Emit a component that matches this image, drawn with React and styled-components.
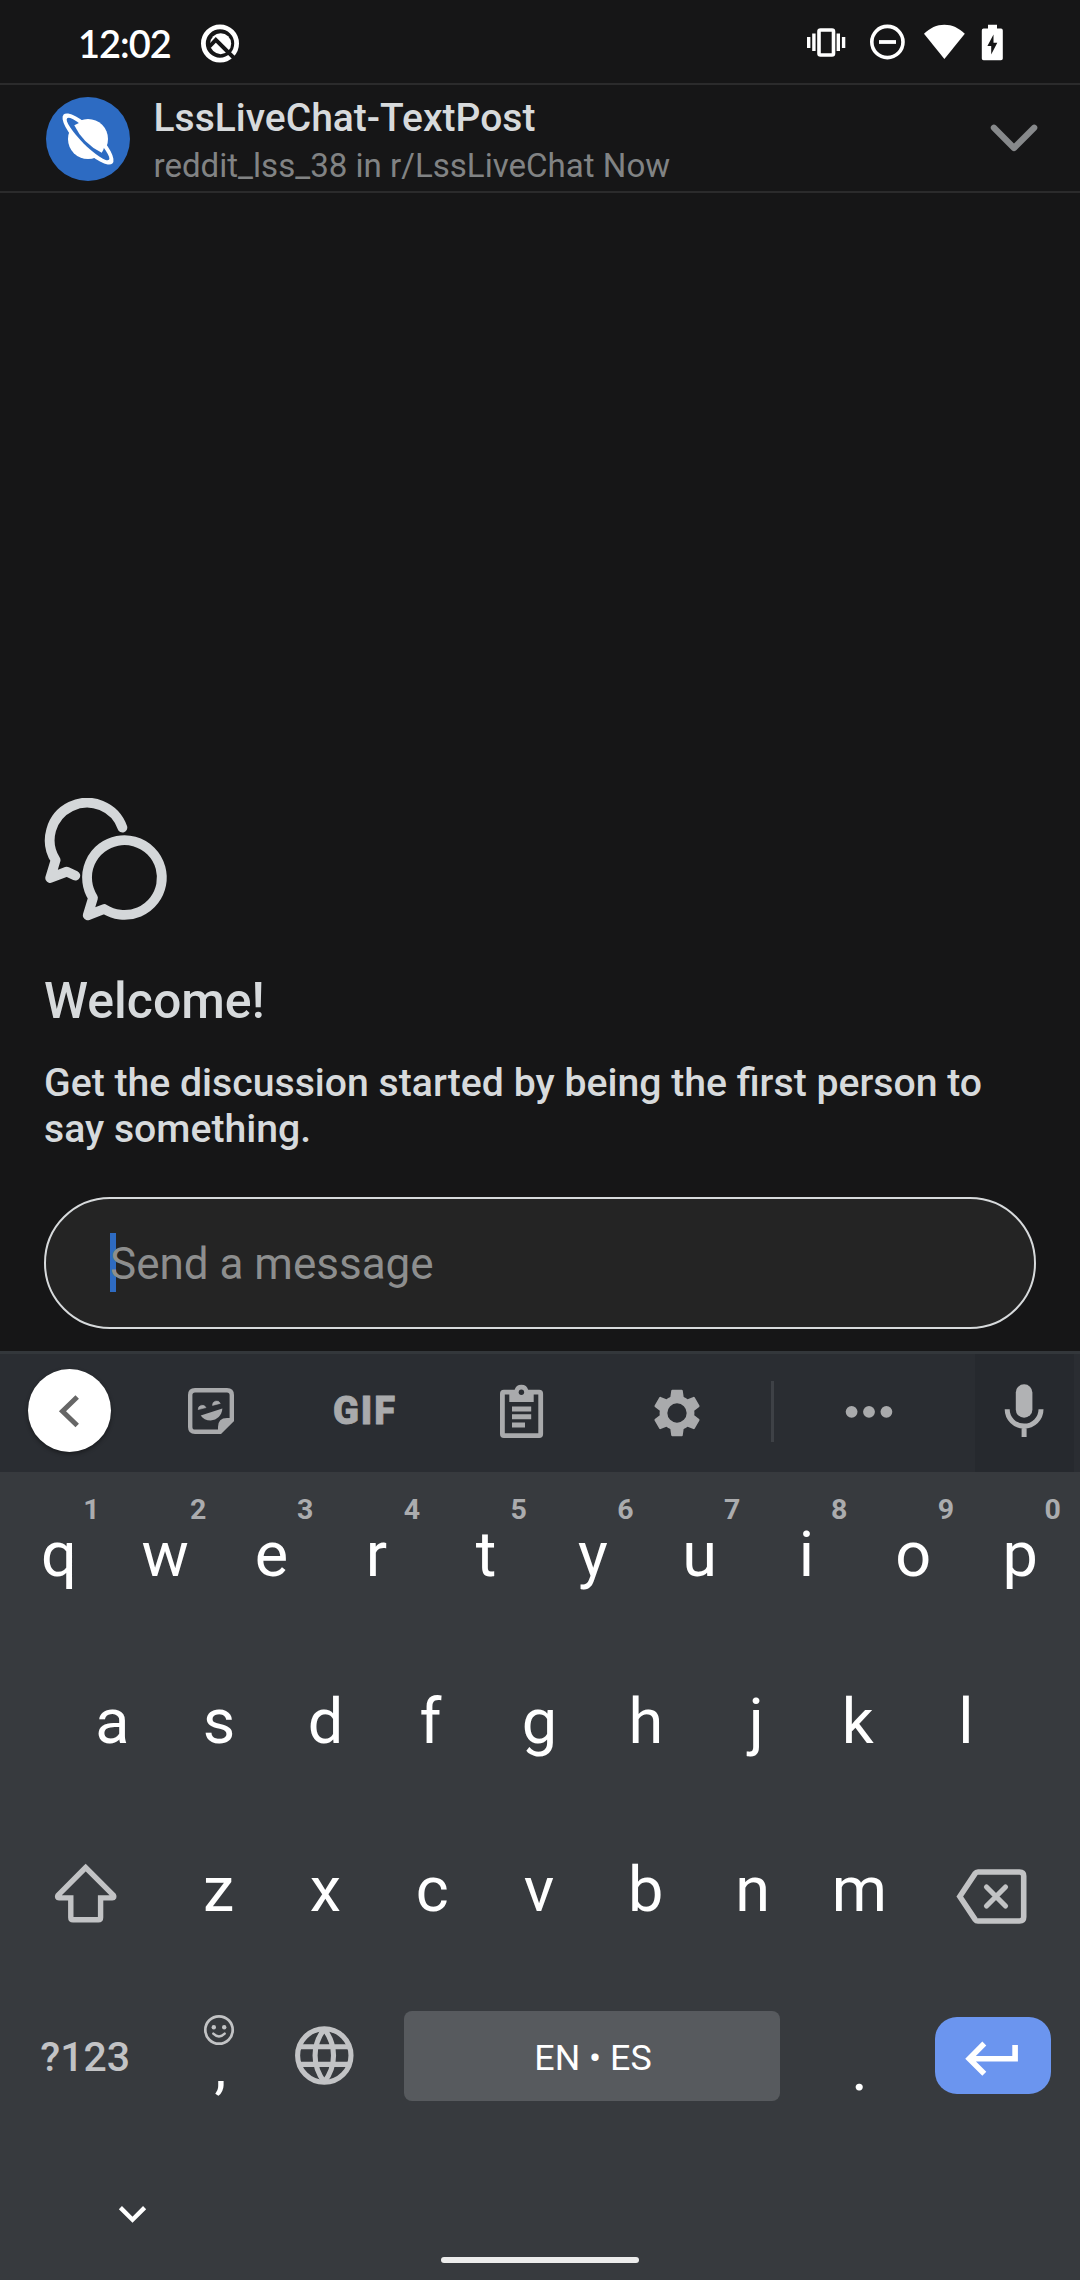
import React from "react";
import styled, { createGlobalStyle } from "styled-components";

const Global = createGlobalStyle`
  * { box-sizing: border-box; }
  body { margin: 0; background: #161617; font-family: Roboto, "Noto Sans", sans-serif; }
`;

const Screen = styled.main`
  width: 1080px;
  height: 2280px;
  display: flex;
  flex-direction: column;
  overflow: hidden;
  background: #161617;
`;

const Svg = styled.svg`
  display: block;
  flex: none;
`;

/* box = [x, y, width, height] of the drawn area */
const Icon = ({ box, children, ...rest }) => (
  <Svg width={box[2]} height={box[3]} viewBox={box.join(" ")} fill="none" {...rest}>
    {children}
  </Svg>
);

/* ---------- status bar ---------- */
const StatusBar = styled.header`
  height: 83px;
  padding: 0 77px 0 78px;
  display: flex;
  align-items: center;
  justify-content: space-between;
  color: #fff;
`;
const StatusLeft = styled.div`
  display: flex;
  align-items: center;
`;
const Clock = styled.span`
  width: 122px;
  padding-top: 3px;
  font: 600 38px/46px Lato, sans-serif;
  letter-spacing: -1px;
`;
const StatusRight = styled.div`
  display: flex;
  align-items: center;
  gap: ${(p) => p.$gap || 0}px;
`;

/* ---------- post header ---------- */
const PostHeader = styled.section`
  height: 110px;
  padding: 0 38px 0 46px;
  display: flex;
  align-items: center;
  border-top: 2px solid #2b2b2c;
  border-bottom: 2px solid #2b2b2c;
`;
const HeaderText = styled.div`
  flex: 1;
  margin-left: 23.5px;
  display: flex;
  flex-direction: column;
  padding-top: 8px;
`;
const Title = styled.h1`
  margin: 0;
  font-size: 39px;
  line-height: 48px;
  font-weight: 500;
  color: #d7dadc;
`;
const Subtitle = styled.span`
  font-size: 33.1px;
  line-height: 48px;
  color: #818384;
`;

/* ---------- chat ---------- */
const Chat = styled.section`
  flex: 1;
  display: flex;
  flex-direction: column;
  justify-content: flex-end;
  padding: 0 44px 22px;
  color: #d7dadc;
`;
const Welcome = styled.h2`
  margin: 51px 0 0;
  font-size: 50px;
  line-height: 58px;
  font-weight: 500;
`;
const Prompt = styled.p`
  margin: 29.5px 0 0;
  font-size: 39.2px;
  line-height: 46px;
  font-weight: 500;
`;
const MessageBox = styled.div`
  height: 132px;
  margin-top: 45.5px;
  padding-left: 64px;
  display: flex;
  align-items: center;
  border: 2px solid #d7dadc;
  border-radius: 66px;
  background: #242424;
`;
const Caret = styled.span`
  width: 6px;
  height: 59px;
  margin-right: -6px;
  margin-bottom: 2px;
  background: #2e6bc2;
`;
const Placeholder = styled.span`
  position: relative;
  padding-top: 1px;
  font-size: 44px;
  line-height: 52px;
  color: #8d8e8e;
`;

/* ---------- keyboard ---------- */
const Keyboard = styled.section`
  height: 929px;
  display: flex;
  flex-direction: column;
  background: #373a3e;
`;
const Toolbar = styled.div`
  height: 121px;
  padding-right: 6px;
  display: flex;
  align-items: center;
  border-top: 3px solid #33373b;
  background: #2a2d32;
`;
const BackButton = styled.div`
  width: 83px;
  height: 83px;
  margin: 0 22.25px 5px 28px;
  display: flex;
  align-items: center;
  justify-content: center;
  border-radius: 50%;
  background: #fff;
  box-shadow: 0 2px 4px rgba(0, 0, 0, 0.4);
`;
const Tool = styled.div`
  width: ${(p) => p.$w || 155.5}px;
  padding-right: ${(p) => p.$shift || 0}px;
  display: flex;
  justify-content: center;
`;
const GifLabel = styled.span`
  margin: 0 3px 4px 0;
  font: 900 38px/44px Roboto, sans-serif;
  letter-spacing: 2px;
  color: #a9aaac;
  -webkit-text-stroke: 0.8px #a9aaac;
`;
const Divider = styled.div`
  width: 3px;
  height: 61px;
  margin: 0 0 3px 15.75px;
  background: #3e4146;
`;
const MicTool = styled.div`
  width: 99px;
  height: 118px;
  margin-left: 10px;
  padding-right: 2px;
  display: flex;
  align-items: center;
  justify-content: center;
  background: #26292e;
`;

const Row = styled.div`
  height: 167.5px;
  display: flex;
  align-items: center;
  justify-content: center;
  padding-bottom: ${(p) => p.$lift || 0}px;
  padding-right: ${(p) => p.$inset || 0}px;
`;
const Key = styled.div`
  position: relative;
  flex: none;
  width: 106.8px;
  height: 100%;
  display: flex;
  align-items: center;
  justify-content: center;
  padding: 0 ${(p) => Math.max(0, -2 * p.$nudge)}px 2.5px ${(p) => Math.max(0, 2 * p.$nudge)}px;
  font-size: 63px;
  line-height: 74px;
  color: #fff;
`;
const Hint = styled.span`
  position: absolute;
  top: 23px;
  left: calc(50% + 17.6px);
  width: 30px;
  text-align: center;
  font-size: 28.5px;
  line-height: 30px;
  font-weight: 700;
  color: #abacae;
`;
const SideKey = styled.div`
  width: ${(p) => p.$w}px;
  height: 100%;
  display: flex;
  align-items: center;
  justify-content: center;
`;
const SymbolsKey = styled(SideKey)`
  padding: 3px 0 0 5px;
  font-size: 41px;
  font-weight: 500;
  color: #c2c3c5;
`;
const PunctuationKey = styled.div`
  width: ${(p) => p.$w}px;
  height: 100%;
  padding-top: ${(p) => p.$top}px;
  padding-left: ${(p) => p.$left || 0}px;
  display: flex;
  flex-direction: column;
  align-items: center;
  font-size: 63px;
  line-height: 40px;
  color: #fff;
`;
const Comma = styled.span`
  padding-left: 3px;
  font-size: 60px;
`;
const SpaceBar = styled.div`
  width: 376px;
  height: 90px;
  margin-left: 28px;
  display: flex;
  align-items: center;
  justify-content: center;
  padding: 5px 0 0 2px;
  border-radius: 8px;
  background: #575a5e;
  color: #fff;
  font-size: 35.8px;
`;
const EnterKey = styled.div`
  width: 116px;
  height: 77px;
  margin-right: 29px;
  display: flex;
  align-items: center;
  justify-content: center;
  border-radius: 22px;
  background: #6b95ef;
`;
const NavBar = styled.div`
  flex: 1;
  display: flex;
  flex-direction: column;
  padding-top: 61px;
`;
const Collapse = styled.div`
  padding-left: 116px;
`;
const HomeBar = styled.div`
  width: 198px;
  height: 6px;
  margin: 30px auto 0;
  border-radius: 3px;
  background: #ececec;
`;

const GREY = "#a9aaac";
const LIGHT = "#c2c3c5";

const StatusAppIcon = () => (
  <Icon box={[200, 20.5, 40, 42]}>
    <circle cx="220" cy="43" r="16.6" stroke="#fff" strokeWidth="4.8" />
    <circle cx="220.7" cy="43.2" r="10.5" fill="#fff" />
    <path d="M209.5 46 215.8 39.3 238 61.5" stroke="#161617" strokeWidth="4" />
  </Icon>
);

const VibrateIcon = () => (
  <Icon box={[806, 21.5, 40, 42]}>
    <rect x="819" y="30.5" width="14.5" height="25" rx="1.5" stroke="#fff" strokeWidth="3.6" />
    <path d="M808.7 37.5V48.5M843.6 37.5V48.5M813.9 34V51.5M838.3 34V51.5" stroke="#fff" strokeWidth="3.4" />
  </Icon>
);

const DndIcon = () => (
  <Icon box={[869, 21.5, 37, 42]} style={{ marginLeft: 23 }}>
    <circle cx="887.4" cy="42.5" r="15.6" stroke="#fff" strokeWidth="3.6" />
    <path d="M879 42.5H896" stroke="#fff" strokeWidth="3.8" />
  </Icon>
);

const WifiIcon = () => (
  <Icon box={[923, 21.5, 43, 42]} style={{ marginLeft: 17 }}>
    <path d="M944.4 59.5 924 34.3C929.8 28.6 936.8 25.3 944.4 25.3S959 28.6 964.8 34.3Z" fill="#fff" />
  </Icon>
);

const BatteryIcon = () => (
  <Icon box={[981, 21.5, 22, 42]} style={{ marginLeft: 15 }}>
    <path
      d="M988 25.3H997V29H1001Q1002.8 29 1002.8 31V59Q1002.8 60.8 1001 60.8H983.6Q981.8 60.8 981.8 59V31Q981.8 29 983.6 29H988Z"
      fill="#fff"
    />
    <path d="M993.5 35 987.4 46.5H991.2V55L997.3 43.2H993.5Z" fill="#161617" />
  </Icon>
);

const Avatar = () => (
  <Icon box={[46, 97, 84, 84]} style={{ marginTop: 2 }}>
    <circle cx="88" cy="139" r="42" fill="#2d6bc2" />
    <g transform="translate(88 139) rotate(45)">
      <circle r="20" fill="#fff" />
      <ellipse rx="34.5" ry="10.5" fill="#fff" />
      <ellipse rx="29.5" ry="6.2" fill="#2d6bc2" />
      <path d="M-19.4 0A19.8 19.8 0 0 1 19.4 0Q0 6.8-19.4 0Z" fill="#fff" />
    </g>
  </Icon>
);

const BubblesIcon = () => (
  <Icon box={[44, 798, 124, 123]}>
    <g stroke="#d4d7d9" strokeWidth="9.8" strokeLinecap="round" strokeLinejoin="round">
      <path d="M122.4 827.6A37.4 37.4 0 1 0 55.6 860.2L50.2 878 66.8 871.6 75.3 875.6" />
      <path d="M93 897.8 87.7 915.3 104.2 909A37.4 37.4 0 1 0 93 897.8Z" />
    </g>
  </Icon>
);

const StickerIcon = () => (
  <Icon box={[181, 1383, 60, 60]}>
    <path
      d="M220 1431.8H195Q190.2 1431.8 190.2 1427V1395Q190.2 1390.2 195 1390.2H227Q231.8 1390.2 231.8 1395V1420Z"
      stroke={GREY}
      strokeWidth="4.4"
    />
    <path d="M218 1434V1427Q218 1418 227 1418H234V1420.7L220.7 1434Z" fill={GREY} />
    <path d="M198.2 1409.6A4.1 4.1 0 0 1 206 1407.6ZM212.5 1405.4A4.1 4.1 0 0 1 220.3 1403.4Z" fill={GREY} stroke={GREY} strokeWidth="0.6" />
    <path d="M200.7 1415.4 222.4 1408.6C221.8 1415.4 217 1420.4 210.7 1420.4 206.4 1420.4 202.6 1418.4 200.7 1415.4Z" fill={GREY} />
  </Icon>
);

const ClipboardIcon = () => (
  <Icon box={[491, 1383, 60, 60]}>
    <rect x="502.4" y="1392.2" width="38.3" height="43.4" rx="1.5" stroke={GREY} strokeWidth="4.8" />
    <path d="M509.3 1390H514.6A7 7 0 0 1 528.2 1390H533.7V1402H509.3Z" fill={GREY} />
    <circle cx="521.4" cy="1392.2" r="2.7" fill="#2a2d32" />
    <path d="M512 1408.9H531.2M512 1416.8H531.2M512 1424.9H525" stroke={GREY} strokeWidth="5" />
  </Icon>
);

const GearIcon = () => (
  <Icon box={[0, 0, 58, 58]} viewBox="0 0 24 24">
    <path
      fill={GREY}
      d="M19.14 12.94c.04-.3.06-.61.06-.94 0-.32-.02-.64-.07-.94l2.03-1.58a.49.49 0 0 0 .12-.61l-1.92-3.32a.488.488 0 0 0-.59-.22l-2.39.96c-.5-.38-1.03-.7-1.62-.94l-.36-2.54a.484.484 0 0 0-.48-.41h-3.84c-.24 0-.43.17-.47.41l-.36 2.54c-.59.24-1.13.57-1.62.94l-2.39-.96c-.22-.08-.47 0-.59.22L2.74 8.87c-.12.21-.08.47.12.61l2.03 1.58c-.05.3-.09.63-.09.94s.02.64.07.94l-2.03 1.58a.49.49 0 0 0-.12.61l1.92 3.32c.12.22.37.29.59.22l2.39-.96c.5.38 1.03.7 1.62.94l.36 2.54c.05.24.24.41.48.41h3.84c.24 0 .44-.17.47-.41l.36-2.54c.59-.24 1.13-.56 1.62-.94l2.39.96c.22.08.47 0 .59-.22l1.92-3.32c.12-.22.07-.47-.12-.61l-2.01-1.58zM12 16A4 4 0 1 1 12 8a4 4 0 0 1 0 8z"
    />
  </Icon>
);

const DotsIcon = () => (
  <Icon box={[839.5, 1383, 60, 60]}>
    <circle cx="852.1" cy="1411.8" r="5.9" fill={GREY} />
    <circle cx="869.5" cy="1411.8" r="5.9" fill={GREY} />
    <circle cx="886.9" cy="1411.8" r="5.9" fill={GREY} />
  </Icon>
);

const MicIcon = () => (
  <Icon box={[994, 1383, 60, 60]}>
    <rect x="1015.8" y="1384.2" width="16.6" height="33.6" rx="8.3" fill="#b1b2b4" />
    <path d="M1007.2 1409.2A16.9 16.9 0 0 0 1041 1409.2M1024.1 1425V1437" stroke="#b1b2b4" strokeWidth="5" />
  </Icon>
);

const ShiftIcon = () => (
  <Icon box={[50, 1860, 71.4, 66]} style={{ marginTop: 4, marginLeft: 7 }}>
    <path
      d="M85.7 1867.5 57.9 1895.3C57 1896.8 57.6 1897.9 59 1897.9H70.8V1917.5Q70.8 1919.8 73 1919.8H98.4Q100.6 1919.8 100.6 1917.5V1897.9H112.4C113.8 1897.9 114.4 1896.8 113.5 1895.3Z"
      stroke={LIGHT}
      strokeWidth="5.4"
    />
  </Icon>
);

const BackspaceIcon = () => (
  <Icon box={[955, 1866, 75, 61]} style={{ marginTop: 11, marginRight: 7 }}>
    <path
      d="M960.8 1896.5 976.2 1873.4Q977.2 1872 979 1872H1020.5Q1024.7 1872 1024.7 1876V1917Q1024.7 1921 1020.5 1921H979Q977.2 1921 976.2 1919.6Z"
      stroke={LIGHT}
      strokeWidth="5.6"
    />
    <path d="M987.5 1887 1006.5 1906M1006.5 1887 987.5 1906" stroke={LIGHT} strokeWidth="5.2" strokeLinecap="round" />
  </Icon>
);

const SmileIcon = () => (
  <Icon box={[202, 2013, 34, 34]}>
    <circle cx="219" cy="2030" r="13.7" stroke={LIGHT} strokeWidth="2.7" />
    <circle cx="213.8" cy="2027.2" r="2.2" fill={LIGHT} />
    <circle cx="224.2" cy="2027.2" r="2.2" fill={LIGHT} />
    <path d="M213.3 2033.6Q219 2039.2 224.7 2033.6" stroke={LIGHT} strokeWidth="2.4" strokeLinecap="round" />
  </Icon>
);

const GlobeIcon = () => (
  <Icon box={[294, 2025, 60.6, 61]}>
    <g stroke={LIGHT} strokeWidth="5.1">
      <circle cx="324.3" cy="2055.5" r="26.7" />
      <path d="M324.3 2029C312 2045 312 2066 324.3 2082M324.3 2029C336.6 2045 336.6 2066 324.3 2082M299.5 2046.7H349.2M299.5 2064.4H349.2" />
    </g>
  </Icon>
);

const EnterIcon = () => (
  <Icon box={[963, 2036, 60, 44]} style={{ marginTop: 5 }}>
    <path d="M984.3 2043.6 969.2 2058.7 984.3 2073.8M970 2058.7H1015.1V2045" stroke="#fff" strokeWidth="5.6" />
  </Icon>
);

const numberRow = "qwertyuiop".split("");
const digits = "1234567890";

/* optical centring of letters whose side bearings are uneven */
const nudges = { w: -0.5, e: -1, r: -2.8, f: -2.2, j: 3.2, k: -2.2, l: -0.7, d: -0.4, h: -0.5 };

const LetterKey = ({ letter, hint }) => (
  <Key $nudge={nudges[letter] || 0}>
    {letter}
    {hint && <Hint>{hint}</Hint>}
  </Key>
);

export default function App() {
  return (
    <>
      <Global />
      <Screen>
        <StatusBar>
          <StatusLeft>
            <Clock>12:02</Clock>
            <StatusAppIcon />
          </StatusLeft>
          <StatusRight>
            <VibrateIcon />
            <DndIcon />
            <WifiIcon />
            <BatteryIcon />
          </StatusRight>
        </StatusBar>

        <PostHeader>
          <Avatar />
          <HeaderText>
            <Title>LssLiveChat-TextPost</Title>
            <Subtitle>reddit_lss_38 in r/LssLiveChat Now</Subtitle>
          </HeaderText>
          <Icon box={[986, 120, 56, 36]}>
            <path d="M993.9 127.7 1014 148 1034.2 127.7" stroke="#87898b" strokeWidth="6.2" strokeLinecap="round" strokeLinejoin="round" />
          </Icon>
        </PostHeader>

        <Chat>
          <BubblesIcon />
          <Welcome>Welcome!</Welcome>
          <Prompt>Get the discussion started by being the first person to say something.</Prompt>
          <MessageBox>
            <Caret />
            <Placeholder>Send a message</Placeholder>
          </MessageBox>
        </Chat>

        <Keyboard>
          <Toolbar>
            <BackButton>
              <Icon box={[58, 1393, 26, 36]}>
                <path d="M78.2 1397 63.5 1411.2 78.2 1425.5" stroke="#666" strokeWidth="5" />
              </Icon>
            </BackButton>
            <Tool><StickerIcon /></Tool>
            <Tool><GifLabel>GIF</GifLabel></Tool>
            <Tool $shift={2}><ClipboardIcon /></Tool>
            <Tool $shift={2}><GearIcon /></Tool>
            <Divider />
            <Tool $w={191} $shift={1}><DotsIcon /></Tool>
            <MicTool><MicIcon /></MicTool>
          </Toolbar>

          <Row $inset={1}>
            {numberRow.map((k, i) => (
              <LetterKey key={k} letter={k} hint={digits[i]} />
            ))}
          </Row>
          <Row $inset={1}>
            {"asdfghjkl".split("").map((k) => (
              <LetterKey key={k} letter={k} />
            ))}
          </Row>
          <Row $inset={2}>
            <SideKey $w={165.2}><ShiftIcon /></SideKey>
            {"zxcvbnm".split("").map((k) => (
              <LetterKey key={k} letter={k} />
            ))}
            <SideKey $w={165.2}><BackspaceIcon /></SideKey>
          </Row>
          <Row $lift={5}>
            <SymbolsKey $w={165.5}>?123</SymbolsKey>
            <PunctuationKey $w={107} $top={38.5}>
              <SmileIcon />
              <Comma>,</Comma>
            </PunctuationKey>
            <SideKey $w={103.5}><GlobeIcon /></SideKey>
            <SpaceBar>EN • ES</SpaceBar>
            <PunctuationKey $w={155} $top={74} $left={4}>.</PunctuationKey>
            <EnterKey><EnterIcon /></EnterKey>
          </Row>

          <NavBar>
            <Collapse>
              <Icon box={[116, 2203, 33, 24]}>
                <path d="M120.4 2207.6 132.5 2219.7 144.6 2207.6" stroke="#fff" strokeWidth="4.4" />
              </Icon>
            </Collapse>
            <HomeBar />
          </NavBar>
        </Keyboard>
      </Screen>
    </>
  );
}
